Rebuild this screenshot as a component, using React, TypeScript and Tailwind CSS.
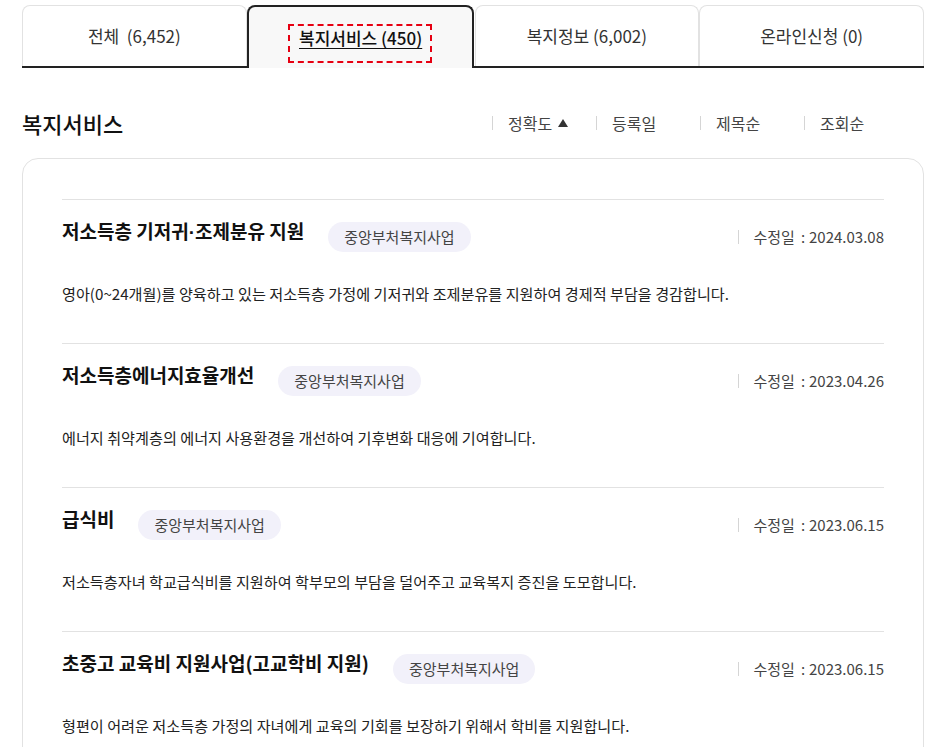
import React from "react";

const font = { fontFamily: '"Noto Sans CJK KR", "Noto Sans", sans-serif' };

const tabs = [
  { label: "전체  (6,452)", active: false },
  { label: "복지서비스 (450)", active: true },
  { label: "복지정보 (6,002)", active: false },
  { label: "온라인신청 (0)", active: false },
];

const sorts = ["정확도", "등록일", "제목순", "조회순"];

const items: { title: React.ReactNode; date: string; desc: string }[] = [
  {
    title: (
      <>
        저소득층 기저귀<span className="font-['Liberation_Sans',sans-serif]">·</span>조제분유 지원
      </>
    ),
    date: "2024.03.08",
    desc: "영아(0~24개월)를 양육하고 있는 저소득층 가정에 기저귀와 조제분유를 지원하여 경제적 부담을 경감합니다.",
  },
  {
    title: "저소득층에너지효율개선",
    date: "2023.04.26",
    desc: "에너지 취약계층의 에너지 사용환경을 개선하여 기후변화 대응에 기여합니다.",
  },
  {
    title: "급식비",
    date: "2023.06.15",
    desc: "저소득층자녀 학교급식비를 지원하여 학부모의 부담을 덜어주고 교육복지 증진을 도모합니다.",
  },
  {
    title: "초중고 교육비 지원사업(고교학비 지원)",
    date: "2023.06.15",
    desc: "형편이 어려운 저소득층 가정의 자녀에게 교육의 기회를 보장하기 위해서 학비를 지원합니다.",
  },
];

export default function App() {
  return (
    <div className="w-[936px] h-[747px] overflow-hidden bg-white pl-[22px] pr-[12px] pt-[5px]" style={font}>
      {/* Tabs */}
      <div className="flex h-[63px] border-b-2 border-[#222]">
        {tabs.map((t, i) =>
          t.active ? (
            <div
              key={i}
              className="flex-1 -mb-[2px] flex items-start justify-center rounded-t-[8px] border-2 border-b-0 border-[#222] bg-[#f8f8f8] mr-[1px] pt-[19px]"
            >
              <span className="outline-2 outline-dashed outline-[#e60012] pl-[9px] pr-[8px] pt-[2px] pb-[13px] text-[17px] font-medium text-[#111] leading-[20px]">
                <span className="underline underline-offset-[3px]">{t.label}</span>
              </span>
            </div>
          ) : (
            <div
              key={i}
              className="flex-1 flex items-center justify-center rounded-t-[8px] border border-b-0 border-[#e2e2e2] text-[17px] text-[#333]"
            >
              <span className="whitespace-pre">{t.label}</span>
            </div>
          )
        )}
      </div>

      {/* Heading + sort */}
      <div className="mt-[37px] flex items-center justify-between h-[36px]">
        <h2 className="text-[22px] font-medium text-[#111] leading-none">복지서비스</h2>
        <div className="flex items-center pr-[16px]">
          {sorts.map((s, i) => (
            <div key={i} className="flex items-center">
              <span className="h-[14px] w-px bg-[#d5d5d5]" />
              <span className="w-[103px] pl-[15px] text-[16px] text-[#444] flex items-center gap-[6px]">
                {s}
                {i === 0 && (
                  <svg width="10" height="8" viewBox="0 0 10 8">
                    <path d="M5 0 L10 8 L0 8 Z" fill="#333" />
                  </svg>
                )}
              </span>
            </div>
          ))}
        </div>
      </div>

      {/* Card */}
      <div className="mt-[17px] rounded-[16px] border border-[#e2e2e2] px-[39px] pt-[40px] h-[700px]">
        {items.map((it, i) => (
          <div key={i} className="border-t border-[#e2e2e2] h-[144px] pt-[22px]">
            <div className="flex items-start justify-between">
              <div className="flex items-start">
                <h3 className="text-[19px] font-bold text-[#111] leading-[22px] -mt-[2px]">{it.title}</h3>
                <span className="ml-[24px] h-[30px] rounded-full bg-[#f2f1fa] px-[16px] text-[15px] text-[#444] flex items-center">
                  중앙부처복지사업
                </span>
              </div>
              <div className="flex items-center h-[30px]">
                <span className="h-[14px] w-px bg-[#d5d5d5] mr-[14px]" />
                <span className="text-[15px] text-[#444]">
                  수정일<span className="ml-[6px] mr-[4px]">:</span>
                  {it.date}
                </span>
              </div>
            </div>
            <p className="mt-[31px] text-[15.15px] text-[#222] leading-[20px]">{it.desc}</p>
          </div>
        ))}
      </div>
    </div>
  );
}
